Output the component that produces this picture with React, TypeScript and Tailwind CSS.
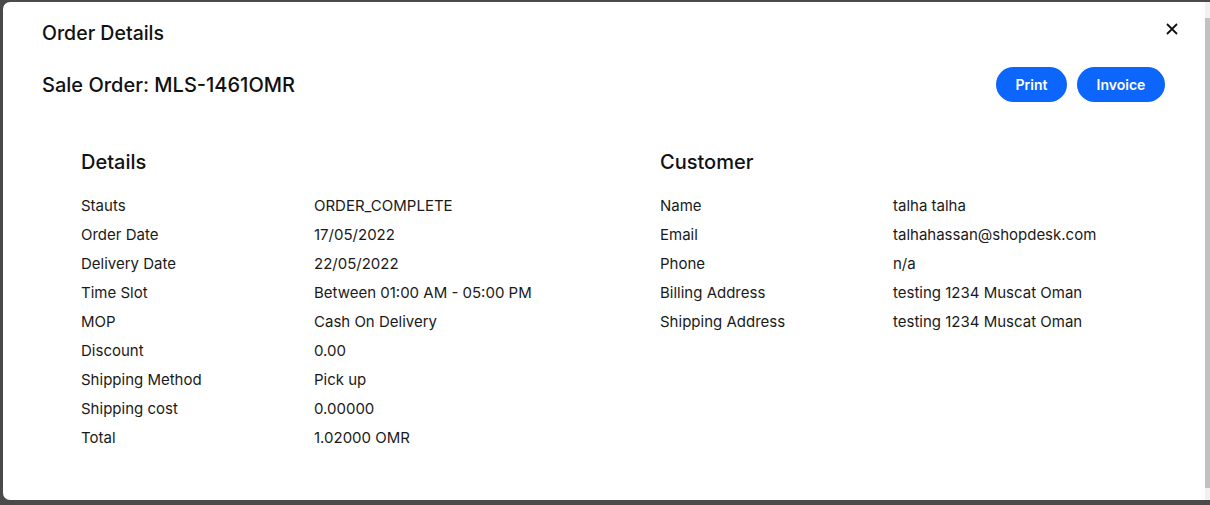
import React from 'react';

const details: [string, string][] = [
  ['Stauts', 'ORDER_COMPLETE'],
  ['Order Date', '17/05/2022'],
  ['Delivery Date', '22/05/2022'],
  ['Time Slot', 'Between 01:00 AM - 05:00 PM'],
  ['MOP', 'Cash On Delivery'],
  ['Discount', '0.00'],
  ['Shipping Method', 'Pick up'],
  ['Shipping cost', '0.00000'],
  ['Total', '1.02000 OMR'],
];

const customer: [string, string][] = [
  ['Name', 'talha talha'],
  ['Email', 'talhahassan@shopdesk.com'],
  ['Phone', 'n/a'],
  ['Billing Address', 'testing 1234 Muscat Oman'],
  ['Shipping Address', 'testing 1234 Muscat Oman'],
];

const InfoBlock: React.FC<{ title: string; rows: [string, string][] }> = ({ title, rows }) => (
  <div>
    <h3 className="text-[20px] leading-[24px] font-medium text-[#111]">{title}</h3>
    <div className="mt-[17px]">
      {rows.map(([label, value]) => (
        <div key={label} className="flex text-[15px] leading-[29px] text-[#1a1a1a]">
          <span className="w-[233px] shrink-0">{label}</span>
          <span>{value}</span>
        </div>
      ))}
    </div>
  </div>
);

export default function App() {
  return (
    <div
      className="w-full h-[505px] bg-[#4a4a4a] pt-[2px] pl-[3px] overflow-hidden"
      style={{ fontFamily: 'Inter, "Noto Sans", sans-serif' }}
    >
      <div className="h-[498px] bg-white rounded-l-[7px] flex">
        <div className="flex-1 pl-[39px] pr-[40px]">
          {/* Header */}
          <div className="flex items-center justify-between pt-[20px]">
            <h2 className="text-[19.5px] leading-[22px] font-medium text-[#111]">Order Details</h2>
            <button className="mr-[-13px] mt-[-8px] text-[#111]">
              <svg width="12" height="12" viewBox="0 0 12 12" fill="none" stroke="currentColor" strokeWidth="1.8">
                <path d="M1 1l10 10M11 1L1 11" />
              </svg>
            </button>
          </div>

          <div className="flex items-center justify-between mt-[23px]">
            <h1 className="text-[20px] leading-[26px] font-medium text-[#111]">Sale Order: MLS-1461OMR</h1>
            <div className="flex gap-[10px]">
              <button className="h-[35px] w-[71px] rounded-full bg-[#0d66fc] text-white text-[14px] font-semibold">
                Print
              </button>
              <button className="h-[35px] w-[88px] rounded-full bg-[#0d66fc] text-white text-[14px] font-semibold">
                Invoice
              </button>
            </div>
          </div>

          {/* Sections */}
          <div className="grid grid-cols-[579px_1fr] pl-[39px] mt-[48px]">
            <InfoBlock title="Details" rows={details} />
            <InfoBlock title="Customer" rows={customer} />
          </div>
        </div>

        {/* Scrollbar */}
        <div className="w-[5px] bg-[#f1f1f1] pt-[16px]">
          <div className="h-[470px] bg-[#c1c1c1]" />
        </div>
      </div>
    </div>
  );
}
